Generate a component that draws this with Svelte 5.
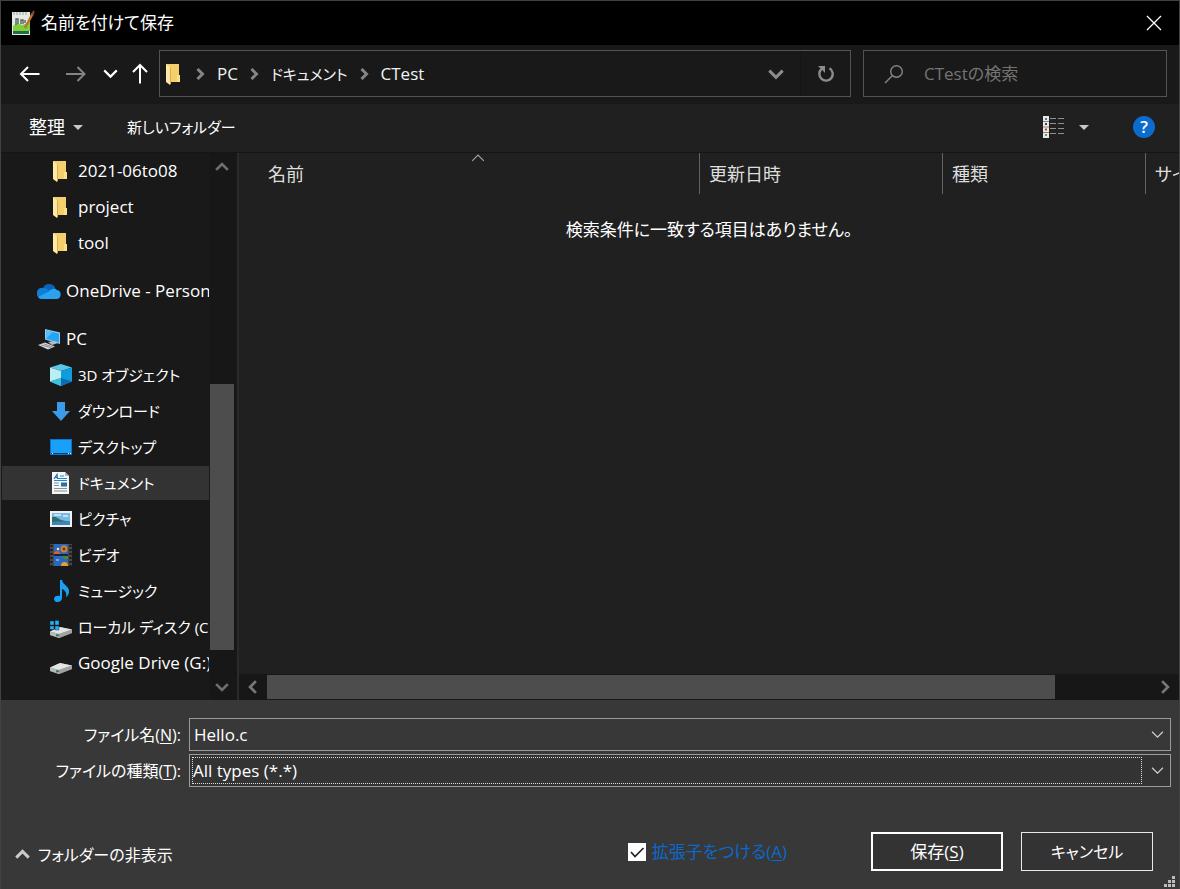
<script lang="ts">
  let fileName = $state('Hello.c');
  let fileType = $state('all');
  let addExtension = $state(true);
  let query = $state('');

  const crumbs = [
    { label: 'PC' },
    { label: 'ドキュメント', kana: true },
    { label: 'CTest' }
  ];

  const groups = [
    [
      { icon: 'folder', label: '2021-06to08' },
      { icon: 'folder', label: 'project' },
      { icon: 'folder', label: 'tool' }
    ],
    [{ icon: 'cloud', label: 'OneDrive - Personal', root: true }],
    [
      { icon: 'pc', label: 'PC', root: true },
      { icon: 'cube', label: '3D オブジェクト', kana: true },
      { icon: 'download', label: 'ダウンロード', kana: true },
      { icon: 'desktop', label: 'デスクトップ', kana: true },
      { icon: 'document', label: 'ドキュメント', kana: true, selected: true },
      { icon: 'picture', label: 'ピクチャ', kana: true },
      { icon: 'video', label: 'ビデオ', kana: true },
      { icon: 'music', label: 'ミュージック', kana: true },
      { icon: 'system', label: 'ローカル ディスク (C:)', kana: true },
      { icon: 'drive', label: 'Google Drive (G:)' }
    ]
  ];

  const columns = [
    { key: 'name', label: '名前' },
    { key: 'date', label: '更新日時' },
    { key: 'kind', label: '種類' },
    { key: 'size', label: 'サイズ' }
  ];
</script>

{#snippet chevron(dir, size, width)}
  <svg class="chev {dir}" width={size} height={size} viewBox="0 0 12 12" aria-hidden="true">
    <path d="M1 3.500 6 8.500 11 3.500" fill="none" stroke="currentColor" stroke-width={width} />
  </svg>
{/snippet}

{#snippet driveShape()}
  <path d="M0 15.500 10 11 22 13.500 22 17 9 22 0 19z" fill="#8d8d8d" />
  <path d="M0 15.500 10 11 22 13.500 9 18z" fill="#e4e4e4" />
  <path d="M0 15.500 9 18V22L0 19z" fill="#b9b9b9" />
  <path d="M9 18 22 13.500V17L9 22z" fill="#a2a2a2" />
  <path d="M6 18.300h3v2H6z" fill="#2f7d5b" />
{/snippet}

{#snippet icon(name)}
  <svg class="icon" width="24" height="24" viewBox="-1 -1 24 24" aria-hidden="true">
    {#if name === 'folder'}
      <path d="M3 1h13v11l1 1v6H5z" fill="#f5cf6c" />
      <path d="M14 12h3v7h-3z" fill="#ffdf86" />
      <path d="M3 1 7 4.500V22L3 19z" fill="#ffe9a6" />
      <path d="M7 4.500V22l1-1.500V5z" fill="#dcae48" />
    {:else if name === 'cloud'}
      <path d="M5 8a6.500 6 0 0 1 12.500 1L13 13 4 10z" fill="#0a64b8" />
      <path d="M-1 14a5 5 0 0 1 6-6c4 0 6 2 10 5L4 19a5 5 0 0 1-5-5z" fill="#0f7fd6" />
      <path d="M11 11.500c2-3 6-3.500 8-1.500a4.600 4.600 0 0 1 0 9H4c-2 0-3-1-4-2z" fill="#2ba2f0" />
    {:else if name === 'pc'}
      <path d="M7 1 22 4.500V16L7 11.500z" fill="#9fc9ea" />
      <path d="M8 2.300 21 5.400V14.500L8 10.700z" fill="#23a4f6" />
      <path d="M8 2.300 15 4 8 10.700z" fill="#58bdfa" />
      <path d="M10 14 16 13 20 15 14 17z" fill="#b8bcc2" />
      <path d="M0 17 7 14.500 17 18.500 10 21.500z" fill="#d5d8dd" />
      <path d="M3 17 13 19.700M6 16 15 19" stroke="#888d96" stroke-width="1" fill="none" />
    {:else if name === 'cube'}
      <path d="M0 3.500 11 0 22 3.500 11 7z" fill="#5cc6e8" />
      <path d="M0 3.500 11 7V22L0 17.500z" fill="#b9eff4" />
      <path d="M11 7 22 3.500V17.500L11 22z" fill="#0f9ddd" />
      <path d="M11 14 0 17.500 11 22 22 17.500z" fill="#0a6db1" />
      <path d="M11 14 0 17.500 11 22z" fill="#3bc3dc" />
    {:else if name === 'download'}
      <path d="M7 2h8v9h5l-9 10-9-10h5z" fill="#3a9bea" />
    {:else if name === 'desktop'}
      <path d="M0 3h22v16H0z" fill="#0a74c9" />
      <path d="M1 4h20v13H1z" fill="#18a0fb" />
      <path d="M1 17h20v1H1z" fill="#0b3f70" />
      <path d="M2 17.500h1M18 17.500h1M20 17.500h1" stroke="#fff" stroke-width="1" />
    {:else if name === 'document'}
      <path d="M2 0h13l4 4v18H2z" fill="#f4f6f7" />
      <path d="M15 0v4h4z" fill="#a9b2b8" />
      <path d="M10 4h4M8 6.500h9M4 8.500h13" stroke="#2586cc" stroke-width="1.200" />
      <path d="M4 7 7 2.500 7.500 7M5 5.500h3" stroke="#1979bd" stroke-width="1.200" fill="none" />
      <path d="M11 10.500h6v4h-6z" fill="#2f6f9f" />
      <path d="M4 11h5M4 13.500h5M4 16.500h13M4 19h13" stroke="#8b9296" stroke-width="1.200" />
    {:else if name === 'picture'}
      <path d="M0 3h22v16H0z" fill="#f1f1f1" />
      <path d="M2 5h18v12H2z" fill="#78b9e8" />
      <path d="M2 9c4-1 5 1 9 3l9 2v3H2z" fill="#2f7065" />
      <path d="M2 14c6-1 12 0 18-1v4H2z" fill="#3d86bd" />
      <path d="M4 7h7M13 8h5" stroke="#d9effa" stroke-width="1.400" />
    {:else if name === 'video'}
      <path d="M0 0h22v22H0z" fill="#484848" />
      <path d="M4 0h14v22H4z" fill="#2b67bd" />
      <path d="M4 10h14v2H4z" fill="#17243c" />
      <path d="M1.500 1v21M20.500 1v21" stroke="#171717" stroke-width="2" stroke-dasharray="2 2" />
      <circle cx="14" cy="5" r="3.400" fill="#d98428" />
      <circle cx="14" cy="5" r="1.400" fill="#6a2f19" />
      <path d="M4 8l4-1 3 3H4z" fill="#d2642c" />
      <path d="M12 12h6v3h-4z" fill="#4a8a33" />
      <circle cx="8" cy="5" r="1.300" fill="#f1dcaa" />
      <path d="M6 15h3v2H6z" fill="#6fa5e5" />
      <path d="M11 22a3.500 4 0 0 1 7 0z" fill="#e2a02f" />
    {:else if name === 'music'}
      <path d="M10 0h2c1 5 7 6 7 11 0 3-1 5-3 6 1-5-1-7-4-8v9c0 5-8 5.500-8 1 0-3 3-4 6-3z" fill="#16a0f8" />
    {:else if name === 'system'}
      {@render driveShape()}
      <path d="M0 5h4v4H0zM5 4.500h4V9H5zM0 10h4v3.500H0zM5 10h4v4H5z" fill="#22b2f6" stroke="#191919" stroke-width=".4" />
    {:else}
      {@render driveShape()}
    {/if}
  </svg>
{/snippet}

<main class="dialog">
  <header class="title">
    <svg width="24" height="26" viewBox="0 0 24 26" aria-hidden="true">
      <path d="M1 2h18v23H1z" fill="#e6e9e4" />
      <path d="M2 16l4-3 5 2 8-3v9H2z" fill="#7ed03c" />
      <path d="M2 21h16v3H2z" fill="#1e6f45" />
      <path d="M5 15V9h2v5M10 14v-4h2v4M14 10v3" fill="none" stroke="#55645c" stroke-width="1.400" />
      <path d="M3 2v3M6 2v3M9 2v3M12 2v3M15 2v3" stroke="#9ca39f" />
      <path d="M22 3 14 18" stroke="#bc7430" stroke-width="2.600" />
      <path d="M23 1 21 5" stroke="#7a4b35" stroke-width="2" />
    </svg>
    <h1>名前を付けて保存</h1>
    <button class="close" aria-label="閉じる">
      <svg width="16" height="16" viewBox="0 0 16 16"><path d="M1 1 15 15M15 1 1 15" stroke="#fff" stroke-width="1.300" /></svg>
    </button>
  </header>

  <nav class="navbar">
    <button aria-label="戻る">
      <svg width="22" height="18" viewBox="0 0 22 18"><path d="M20.500 9H2M9 2 2 9l7 7" fill="none" stroke="#fff" stroke-width="2" /></svg>
    </button>
    <button aria-label="進む">
      <svg width="22" height="18" viewBox="0 0 22 18"><path d="M1 9h18.500M12.500 2l7 7-7 7" fill="none" stroke="#85857f" stroke-width="2" /></svg>
    </button>
    <button class="slim" aria-label="最近表示した場所">{@render chevron('down', 15, 1.7)}</button>
    <button class="up-button" aria-label="上へ">
      <svg width="18" height="22" viewBox="0 0 18 22"><path d="M9 20.500V2M2 9l7-7 7 7" fill="none" stroke="#fff" stroke-width="2" /></svg>
    </button>
    <div class="address">
      {@render icon('folder')}
      {#each crumbs as crumb}
        <span class="sep">{@render chevron('right', 12, 3)}</span>
        <a href="#{crumb.label}" class:kana={crumb.kana}>{crumb.label}</a>
      {/each}
      <button class="history" aria-label="以前の場所">{@render chevron('down', 16, 2.3)}</button>
      <button class="refresh" aria-label="最新の情報に更新">
        <svg width="18" height="18" viewBox="0 0 18 18">
          <path d="M12.500 3.200A6.700 6.700 0 1 1 4.500 4" fill="none" stroke="#8c8c8c" stroke-width="2.400" />
          <path d="M1 1h7v7L5.700 5.500 3 3z" fill="#8c8c8c" />
        </svg>
      </button>
    </div>
    <label class="search">
      <svg width="20" height="20" viewBox="0 0 20 20" aria-hidden="true">
        <circle cx="12.500" cy="7.500" r="5.800" fill="none" stroke="#858585" stroke-width="1.400" />
        <path d="M8.300 11.700 1 19" stroke="#858585" stroke-width="1.400" />
      </svg>
      <input type="search" aria-label="検索" placeholder="CTestの検索" bind:value={query} />
    </label>
  </nav>

  <div class="toolbar">
    <button class="kanji">整理<span class="caret"></span></button>
    <button class="kana">新しいフォルダー</button>
    <button class="view" aria-label="表示方法の変更">
      <svg width="22" height="22" viewBox="0 0 22 22">
        <path d="M0 0h6v22H0z" fill="#e9e9e9" />
        <path d="M0 5.500h6M0 11h6M0 16.500h6" stroke="#888" />
        <path d="M2 2h2v2H2z" fill="#2b7fc0" /><path d="M2 7h2v2H2z" fill="#6b3b2a" />
        <path d="M2 12.500h2v2H2z" fill="#c0452b" /><path d="M2 18h2v2H2z" fill="#5ba33a" />
        <path d="M7 2.500h6M15 2.500h6M7 7.500h6M15 7.500h6M7 12.500h6M15 12.500h6M7 17.500h6M15 17.500h6" stroke="#90908c" />
      </svg>
      <span class="caret"></span>
    </button>
    <button class="help" aria-label="ヘルプ">?</button>
  </div>

  <div class="body">
    <aside>
      <div class="tree">
        {#each groups as group}
          <ul>
            {#each group as item}
              <li class:root={item.root} class:selected={item.selected}>
                <a href="#{item.icon}">{@render icon(item.icon)}<span class:kana={item.kana}>{item.label}</span></a>
              </li>
            {/each}
          </ul>
        {/each}
      </div>
      <div class="vbar">
        <button aria-label="上へスクロール">{@render chevron('up', 14, 2.3)}</button>
        <div class="vtrack"><div class="vthumb"></div></div>
        <button aria-label="下へスクロール">{@render chevron('down', 14, 2.3)}</button>
      </div>
    </aside>

    <section class="list">
      <div class="sheet">
        <table>
          <thead>
            <tr>
              {#each columns as column}
                <th class={column.key} scope="col">
                  {column.label}
                  {#if column.key === 'name'}
                    <span class="sort">{@render chevron('up', 14, 1)}</span>
                  {/if}
                </th>
              {/each}
            </tr>
          </thead>
        </table>
        <p>検索条件に一致する項目はありません。</p>
      </div>
      <div class="hbar">
        <button aria-label="左へスクロール">{@render chevron('left', 14, 2.3)}</button>
        <div class="htrack"><div class="hthumb"></div></div>
        <button aria-label="右へスクロール">{@render chevron('right', 14, 2.3)}</button>
      </div>
    </section>
  </div>

  <footer>
    <div class="fields">
      <label for="file-name">ファイル名(<u>N</u>):</label>
      <div class="field">
        <input id="file-name" type="text" bind:value={fileName} />
        <span class="drop">{@render chevron('down', 13, 1.1)}</span>
      </div>
      <label for="file-type">ファイルの種類(<u>T</u>):</label>
      <div class="field dark">
        <select id="file-type" bind:value={fileType}>
          <option value="all">All types (*.*)</option>
        </select>
        <span class="drop">{@render chevron('down', 13, 1.1)}</span>
      </div>
    </div>
    <div class="actions">
      <button class="fold">{@render chevron('up', 15, 2.3)}フォルダーの非表示</button>
      <label class="check">
        <input type="checkbox" bind:checked={addExtension} />
        <svg width="18" height="18" viewBox="0 0 18 18" aria-hidden="true">
          <path d="M0 0h18v18H0z" fill="#fff" />
          {#if addExtension}<path d="M3 9l4 4.500L15.500 5" fill="none" stroke="#222" stroke-width="1.700" />{/if}
        </svg>
        <span>拡張子をつける(<u>A</u>)</span>
      </label>
      <button class="push primary">保存(<u>S</u>)</button>
      <button class="push">キャンセル</button>
    </div>
    <svg class="grip" width="12" height="12" viewBox="0 0 12 12" aria-hidden="true">
      <path d="M8 0h3v3H8zM4 4h3v3H4zM8 4h3v3H8zM0 8h3v3H0zM4 8h3v3H4zM8 8h3v3H8z" fill="#bdbdbd" />
    </svg>
  </footer>
</main>

<style>
  :global(body) {
    background: #191919;
  }
  .dialog {
    box-sizing: border-box;
    min-height: 100vh;
    display: flex;
    flex-direction: column;
    border: 1px solid #424242;
    border-width: 1px 1px 0;
    background: #191919;
    color: #fff;
    font: 17px/24px 'Open Sans', 'Noto Sans CJK JP', sans-serif;
    font-feature-settings: 'palt';
  }
  .dialog * {
    box-sizing: border-box;
  }
  button,
  input,
  select {
    font: inherit;
    font-feature-settings: inherit;
    color: inherit;
    background: none;
    border: 0;
    padding: 0;
    margin: 0;
    outline: 0;
    border-radius: 0;
  }
  a {
    color: inherit;
    text-decoration: none;
  }
  u {
    text-underline-offset: 2px;
  }
  svg {
    display: block;
    flex: none;
  }
  .up { transform: rotate(180deg); }
  .left { transform: rotate(90deg); }
  .right { transform: rotate(-90deg); }
  .kana { font-size: 15px; }
  .kanji { font-size: 18px; }

  .title {
    height: 44px;
    display: flex;
    align-items: center;
    gap: 6px;
    padding: 0 17px 0 10px;
    background: #000;
  }
  h1 {
    flex: 1;
    margin: 0;
    font-size: 17px;
    font-weight: 400;
  }

  .navbar {
    height: 59px;
    display: flex;
    align-items: center;
    padding: 0 12px 2px 6px;
  }
  .navbar > button {
    width: 46px;
    display: flex;
    justify-content: center;
  }
  .navbar > .slim {
    width: 22px;
  }
  .navbar > .up-button {
    width: 38px;
  }
  .address,
  .search {
    height: 47px;
    display: flex;
    align-items: center;
    border: 1px solid #535353;
  }
  .address {
    flex: 1;
    min-width: 0;
    padding-left: 2px;
    color: #f2f2f2;
  }
  .sep {
    margin: 0 11px 0 10px;
    color: #858585;
  }
  .address > .icon + .sep {
    margin-left: 8px;
  }
  .history {
    margin-left: auto;
    padding: 0 16px;
    color: #8c8c8c;
  }
  .refresh {
    width: 50px;
    height: 45px;
    display: grid;
    place-items: center;
    border-left: 1px solid #151515;
  }
  .search {
    width: 304px;
    margin-left: 12px;
    padding: 0 20px;
    gap: 20px;
  }
  .search input {
    flex: 1;
    min-width: 0;
  }
  .search input::placeholder {
    color: #747474;
    opacity: 1;
  }

  .toolbar {
    height: 49px;
    display: flex;
    align-items: center;
    gap: 44px;
    padding: 0 24px 2px 28px;
    background: #202020;
    border-bottom: 1px solid #151515;
  }
  .toolbar button {
    display: flex;
    align-items: center;
    gap: 8px;
  }
  .caret {
    border: 5px solid transparent;
    border-top-color: #c8c8c8;
    border-bottom: 0;
  }
  .toolbar .view {
    margin-left: auto;
    gap: 14px;
  }
  .toolbar .help {
    width: 22px;
    height: 22px;
    justify-content: center;
    border-radius: 50%;
    background: #0b6cce;
    font-weight: 600;
  }

  .body {
    flex: 1;
    display: flex;
    min-height: 0;
  }
  aside {
    width: 238px;
    flex: none;
    display: flex;
    border-right: 2px solid #2a2a2a;
  }
  .tree {
    flex: 1;
    min-width: 0;
  }
  ul {
    list-style: none;
    margin: 0 0 12px;
    padding: 0;
  }
  li {
    height: 36px;
    padding: 1px;
  }
  li a {
    height: 34px;
    display: flex;
    align-items: center;
    gap: 5px;
    padding-left: 47px;
    white-space: nowrap;
    overflow: hidden;
  }
  li.root a {
    padding-left: 35px;
  }
  .selected a {
    background: #333;
  }
  .vbar {
    width: 27px;
    display: flex;
    flex-direction: column;
    align-items: center;
    padding-right: 3px;
    background: #171717;
    color: #707070;
  }
  .vbar button {
    height: 27px;
  }
  .vbar button :global(svg) {
    margin: auto;
  }
  .vtrack {
    flex: 1;
    width: 24px;
    display: flex;
    flex-direction: column;
  }
  .vtrack::before {
    content: '';
    flex: 204;
  }
  .vthumb {
    flex: 266;
    background: #4d4d4d;
  }
  .vtrack::after {
    content: '';
    flex: 23;
  }

  .list {
    flex: 1;
    min-width: 0;
    display: flex;
    flex-direction: column;
    background: #202020;
  }
  .sheet {
    flex: 1;
    overflow: hidden;
  }
  table {
    table-layout: fixed;
    width: 1040px;
    border-collapse: separate;
    border-spacing: 0;
  }
  th {
    position: relative;
    height: 41px;
    padding: 0 9px;
    text-align: left;
    font-size: 18px;
    font-weight: 400;
    color: #dedede;
    border-right: 1px solid #62625f;
  }
  .name {
    width: 461px;
    padding-left: 29px;
  }
  .date { width: 243px; }
  .kind { width: 203px; }
  .sort {
    position: absolute;
    top: -2px;
    left: calc(50% + 2px);
    color: #a5a5a5;
  }
  .sheet p {
    margin: 24px 0 0;
    text-align: center;
  }
  .hbar {
    height: 26px;
    display: flex;
    align-items: center;
    background: #171717;
    color: #777;
  }
  .hbar button {
    width: 28px;
    padding-left: 7px;
  }
  .htrack {
    flex: 1;
    height: 24px;
    display: flex;
  }
  .hthumb {
    flex: 788;
    background: #4d4d4d;
  }
  .htrack::after {
    content: '';
    flex: 96;
  }

  footer {
    position: relative;
    padding: 18px 8px;
    background: #383838;
  }
  .fields {
    display: grid;
    grid-template-columns: 172px 1fr;
    gap: 3px 8px;
    align-items: center;
  }
  .fields label {
    font-size: 16px;
    text-align: right;
  }
  .field {
    height: 33px;
    display: flex;
    align-items: center;
    border: 1px solid #9b9b9b;
  }
  .field input {
    flex: 1;
    min-width: 0;
    padding-left: 4px;
  }
  .dark {
    background: #333;
    padding-left: 2px;
  }
  .field select {
    flex: 1;
    min-width: 0;
    height: 27px;
    appearance: none;
    border: 1px dotted #ddd;
  }
  .drop {
    width: 28px;
    padding-left: 9px;
    color: #d0d0d0;
    pointer-events: none;
  }
  .actions {
    display: flex;
    align-items: center;
    gap: 18px;
    margin-top: 45px;
    padding: 0 18px 0 6px;
  }
  .fold {
    display: flex;
    align-items: center;
    gap: 8px;
    margin-right: auto;
    padding-top: 6px;
    font-size: 16px;
  }
  .fold :global(svg) {
    color: #ccc;
  }
  .check {
    position: relative;
    display: flex;
    align-items: center;
    gap: 6px;
    margin-right: 66px;
    color: #0c68c9;
  }
  .check input {
    position: absolute;
    opacity: 0;
    width: 18px;
    height: 18px;
  }
  .push {
    width: 132px;
    height: 39px;
    background: #333;
    border: 1px solid #e8e8e8;
    font-size: 16px;
  }
  .primary {
    border: 2px solid #fff;
    font-size: 17px;
  }
  .grip {
    position: absolute;
    right: 3px;
    bottom: 1px;
  }
</style>
